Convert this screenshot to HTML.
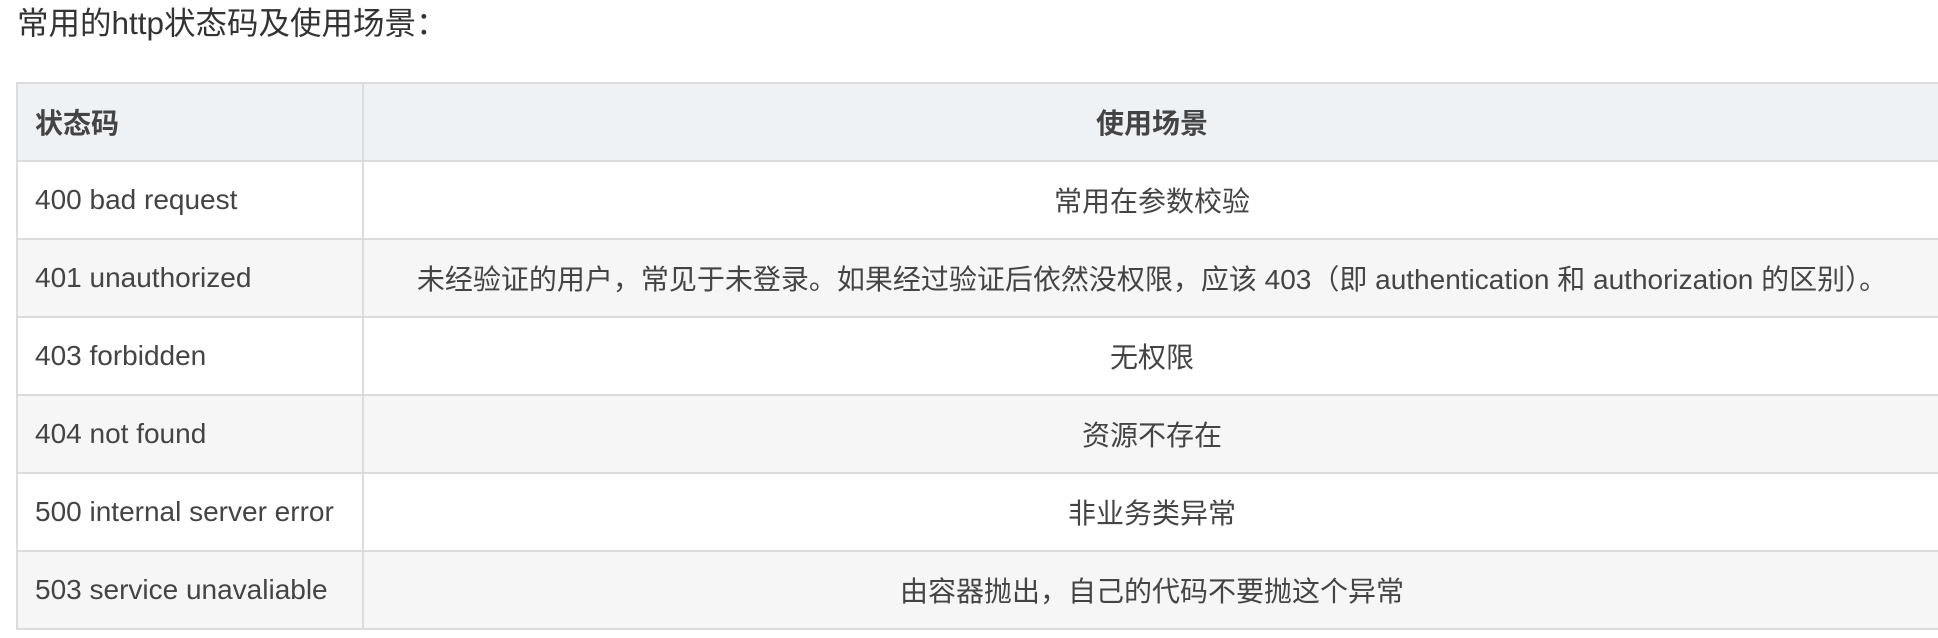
<!DOCTYPE html>
<html><head><meta charset="utf-8"><style>
body{margin:0;background:#fff;width:1938px;height:638px;overflow:hidden;font-family:"Liberation Sans","Noto Sans CJK SC",sans-serif;color:#333}
.t{position:absolute;left:17px;top:1px;font-size:31.5px;line-height:44px;color:#333}
table{position:absolute;left:16px;top:82px;width:1926px;border-collapse:collapse;font-size:28px;color:#444}
td,th{border:2px solid #dcdcdc;height:76px;padding:0 0 0 17px;box-sizing:border-box}
tr{height:78px}
th{background:#eff2f5;font-weight:bold;text-align:left}
th.c,td.c{text-align:center;padding:0}
tr:nth-child(odd) td{background:#f6f6f6}
tr:nth-child(even) td{background:#fff}
.w{width:346px}
</style></head><body>
<div class="t">常用的http状态码及使用场景：</div>
<table>
<tr><th class="w">状态码</th><th class="c">使用场景</th></tr>
<tr><td>400 bad request</td><td class="c">常用在参数校验</td></tr>
<tr><td>401 unauthorized</td><td class="c">未经验证的用户，常见于未登录。如果经过验证后依然没权限，应该 403（即 authentication 和 authorization 的区别）。</td></tr>
<tr><td>403 forbidden</td><td class="c">无权限</td></tr>
<tr><td>404 not found</td><td class="c">资源不存在</td></tr>
<tr><td>500 internal server error</td><td class="c">非业务类异常</td></tr>
<tr><td>503 service unavaliable</td><td class="c">由容器抛出，自己的代码不要抛这个异常</td></tr>
</table>
</body></html>
